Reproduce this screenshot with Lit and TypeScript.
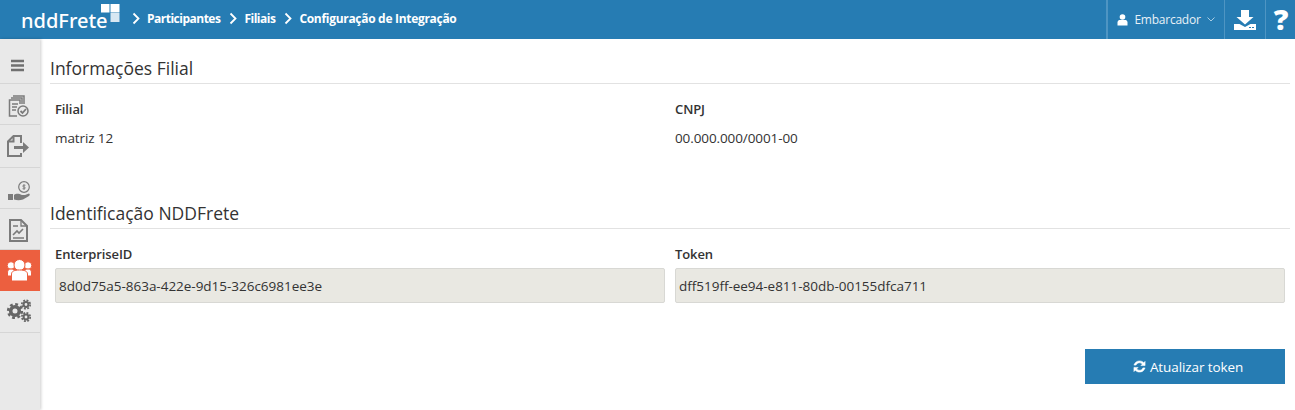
import {LitElement, html, css, svg} from 'lit';
import {customElement} from 'lit/decorators.js';

const icons = [
  svg`<path d="M11 14h13M11 18.500h13M11 23h13" stroke="#707070" stroke-width="2.600" fill="none"/>`,
  svg`<g fill="none" stroke="#7b7b7b" stroke-width="1.500"><path d="M13 7h11v8M11 9h11v6"/><path d="M17 27H9.500V11H20v4"/><path d="M12 15h6M12 18h5M12 21h4"/><circle cx="23" cy="22" r="5"/><path d="M20.500 22l2 2 3.500-4" stroke-width="1.800"/></g>`,
  svg`<g transform="translate(-1 0)"><g fill="none" stroke="#7b7b7b" stroke-width="2"><path d="M22 15V8H14.500L9 13.500V28h13v-3"/><path d="M14.500 8v5.500H9"/></g><path d="M15 18h9v-4l6 5.500-6 5.500v-4h-9z" fill="#7b7b7b"/></g>`,
  svg`<circle cx="24" cy="14" r="5.300" fill="none" stroke="#7b7b7b" stroke-width="1.200"/><path d="M24 11v6M25.500 12.300h-2.500v1.700h2v1.700h-2.500" stroke="#7b7b7b" fill="none" stroke-width=".8"/><path d="M8 21h5v6H8z" fill="#7b7b7b"/><path d="M14 22c3-2 5-1 8 0h3l4-1.500c1 .5 1 1.500 0 2.500l-6 3.500c-3 1-6 1-9 0z" fill="#7b7b7b"/>`,
  svg`<g fill="none" stroke="#7b7b7b"><path d="M10 7h11l6 6v15H10z" stroke-width="2"/><path d="M21 7v6h6M13 13h5M13 25h11" stroke-width="1.300"/><path d="M13 22l4-4 2 2 4-4" stroke-width="1.600"/></g>`,
  svg`<g fill="#fff" stroke="#ec5f3f" stroke-width="1"><circle cx="11" cy="12.500" r="3.800"/><circle cx="28" cy="12.500" r="3.800"/><path d="M7.500 23v-3c0-3 1-4 3.500-4s4 1 4 4v3zM24 23v-3c0-3 1.500-4 4-4s3.500 1 3.500 4v3z"/><circle cx="19.500" cy="12" r="5.500"/><path d="M11.500 28v-7c0-2.500 2.500-4 8-4s8 1.500 8 4v7z"/></g>`,
  svg`<g fill="none" stroke="#666"><circle cx="15" cy="17" r="4.300" stroke-width="3.600"/><circle cx="15" cy="17" r="6.800" stroke-width="2.600" stroke-dasharray="2.800 2.540"/><circle cx="26" cy="10.500" r="2.400" stroke-width="2"/><circle cx="26" cy="10.500" r="4.200" stroke-width="1.700" stroke-dasharray="1.900 1.400"/><circle cx="26" cy="23" r="2.400" stroke-width="2"/><circle cx="26" cy="23" r="4.200" stroke-width="1.700" stroke-dasharray="1.900 1.400"/></g>`,
];

const heights = [45, 41, 43, 41, 41, 41, 42];
const offsets = ['8px', '5px', '0', '6px', '4px', '0', '0'];

@customElement('app-root')
export class AppRoot extends LitElement {
  static override styles = css`
    :host {
      display: block;
      height: 410px;
      overflow: hidden;
      font-family: "Open Sans", "Noto Sans", sans-serif;
      color: #333;
      background: #fff;
    }

    .top {
      display: flex;
      align-items: stretch;
      height: 39px;
      background: #267cb3;
      color: #fff;
    }

    .logo {
      display: flex;
      align-items: flex-start;
      width: 120px;
      padding-left: 21px;
      box-sizing: border-box;
      flex: none;
    }

    .logo-text {
      font-family: "Noto Sans", sans-serif;
      font-size: 20px;
      font-weight: 500;
      line-height: 23px;
      margin-top: 9px;
      width: 80px;
      flex: none;
      white-space: nowrap;
    }

    .logo svg {
      margin-top: 4px;
      flex: none;
    }

    .crumbs {
      display: flex;
      align-items: center;
      flex: 1;
      font-size: 12px;
      font-weight: 700;
      letter-spacing: -0.5px;
      padding: 0 0 3px 12px;
    }

    .crumbs svg {
      margin-right: 6px;
    }

    .crumbs span {
      margin-right: 9px;
    }

    .crumbs span:last-child {
      letter-spacing: -0.3px;
    }

    .tool {
      display: flex;
      align-items: center;
      justify-content: center;
      border-left: 1px solid #4e95c3;
      box-sizing: border-box;
    }

    .user {
      width: 118px;
      font-size: 12px;
      gap: 6px;
      border-left-width: 2px;
      letter-spacing: -0.24px;
      color: #e8f1f7;
    }

    .download {
      width: 41px;
    }

    .help {
      width: 30px;
      font-size: 29px;
      font-weight: 800;
      padding: 0 0 3px 1px;
    }

    .main {
      display: flex;
      height: 371px;
    }

    .side {
      width: 40px;
      flex: none;
      background: #e9e9e9;
      box-shadow: 1px 0 3px rgba(0, 0, 0, 0.2);
    }

    .item {
      display: flex;
      align-items: center;
      justify-content: center;
      box-sizing: border-box;
      border-bottom: 1px solid #d6d6d6;
    }

    .item.active {
      background: #ec5f3f;
      border-bottom: none;
    }

    .content {
      flex: 1;
      padding: 0 5px 0 10px;
    }

    h2 {
      margin: 0;
      font-size: 17.500px;
      font-weight: 400;
      line-height: 24px;
      color: #333;
      padding: 17px 0 3px;
      border-bottom: 1px solid #e2e2e2;
    }

    .second {
      padding-top: 0;
      margin-top: 54px;
    }

    .grid {
      display: grid;
      grid-template-columns: 610px 610px;
      column-gap: 10px;
      padding: 0 5px;
    }

    .label {
      font-size: 13px;
      font-weight: 600;
      line-height: 17px;
      letter-spacing: -0.1px;
      margin-top: 17px;
    }

    .value {
      font-size: 13.500px;
      line-height: 17px;
      margin-top: 12px;
      letter-spacing: -0.1px;
    }

    .field {
      height: 35px;
      box-sizing: border-box;
      margin-top: 5px;
      padding: 0 3px;
      display: flex;
      align-items: center;
      font-size: 13.500px;
      letter-spacing: -0.02px;
      background: #e9e8e2;
      border: 1px solid #d8d8d4;
      border-radius: 2px;
    }

    .actions {
      display: flex;
      justify-content: flex-end;
      padding: 46px 5px 0 0;
    }

    button {
      width: 200px;
      height: 35px;
      display: flex;
      align-items: center;
      justify-content: center;
      gap: 4px;
      border: none;
      padding: 0 0 0 6px;
      background: #267cb3;
      color: #fff;
      font: 400 13.500px "Open Sans", sans-serif;
      letter-spacing: -0.1px;
    }

    button svg {
      stroke: #fff;
      stroke-width: 0.6;
    }
  `;

  override render() {
    const chevron = html`<svg width="9" height="13" viewBox="0 0 9 13"><path d="M1.500 1.500l5 5-5 5" fill="none" stroke="#fff" stroke-width="1.800"/></svg>`;
    return html`
      <div class="top">
        <div class="logo">
          <span class="logo-text">nddFrete</span>
          <svg width="19" height="18" viewBox="0 0 19 18">
            <path d="M0 0h8.500v8.500H0zM9.500 0h9v8.500h-9z" fill="#fff"/>
            <path d="M9.500 9h9v9h-9z" fill="#d7e7f2"/>
          </svg>
        </div>
        <div class="crumbs">
          ${chevron}<span>Participantes</span>
          ${chevron}<span>Filiais</span>
          ${chevron}<span>Configuração de Integração</span>
        </div>
        <div class="tool user">
          <svg width="11" height="12" viewBox="0 0 11 12"><circle cx="5.500" cy="3" r="2.800" fill="#fff"/><path d="M0.500 11.500V8.500C0.500 6.500 2 6 3 6h5c1 0 2.500.5 2.500 2.500v3z" fill="#fff"/></svg>
          <span>Embarcador</span>
          <svg width="8" height="5" viewBox="0 0 8 5"><path d="M.5.500L4 4 7.500.500" fill="none" stroke="#a9cde3"/></svg>
        </div>
        <div class="tool download">
          <svg width="22" height="20" viewBox="0 0 22 20"><path d="M7 0h8v7h4.500L11 14.500 2.500 7H7z" fill="#fff"/><path d="M0 14h5.500l5.500 3 5.500-3H22v6H0z" fill="#fff"/><path d="M15 17h2v1h-2zM18 17h2v1h-2z" fill="#267cb3"/></svg>
        </div>
        <div class="tool help">?</div>
      </div>
      <div class="main">
        <div class="side">
          ${icons.map((icon, i) => html`
            <div class="item ${i === 5 ? 'active' : ''}" style="height:${heights[i]}px;padding-top:${offsets[i]}">
              <svg width="40" height="36" viewBox="0 0 40 36">${icon}</svg>
            </div>`)}
        </div>
        <div class="content">
          <h2>Informações Filial</h2>
          <div class="grid">
            <div>
              <div class="label">Filial</div>
              <div class="value">matriz 12</div>
            </div>
            <div>
              <div class="label">CNPJ</div>
              <div class="value">00.000.000/0001-00</div>
            </div>
          </div>
          <h2 class="second">Identificação NDDFrete</h2>
          <div class="grid">
            <div>
              <div class="label">EnterpriseID</div>
              <div class="field">8d0d75a5-863a-422e-9d15-326c6981ee3e</div>
            </div>
            <div>
              <div class="label">Token</div>
              <div class="field">dff519ff-ee94-e811-80db-00155dfca711</div>
            </div>
          </div>
          <div class="actions">
            <button>
              <svg width="13" height="13" viewBox="0 0 14 14"><path d="M1 5.500C2 2.500 4.500 1 7 1c2 0 3.500.8 4.500 2L13 1.500V6H8.500l1.600-1.600C9.300 3.500 8.200 3 7 3 5.300 3 4 4 3.300 5.500zM13 8.500C12 11.500 9.500 13 7 13c-2 0-3.500-.8-4.500-2L1 12.500V8h4.500L3.900 9.600C4.700 10.500 5.800 11 7 11c1.700 0 3-1 3.700-2.500z" fill="#fff"/></svg>
              Atualizar token
            </button>
          </div>
        </div>
      </div>
    `;
  }
}

declare global {
  interface HTMLElementTagNameMap {
    'app-root': AppRoot;
  }
}
